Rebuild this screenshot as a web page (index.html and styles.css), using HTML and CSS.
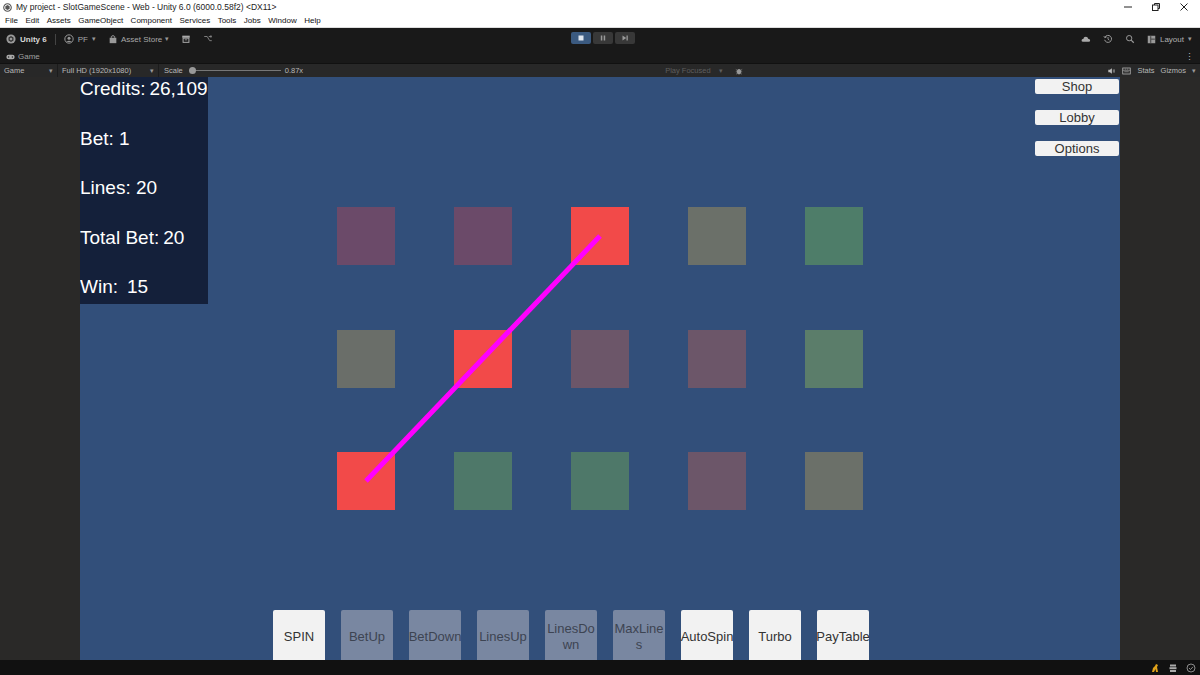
FILE: index.html
```html
<!DOCTYPE html>
<html lang="en">
<head>
  <meta charset="UTF-8" />
  <title>My project - SlotGameScene - Web - Unity 6.0</title>
  <link rel="stylesheet" href="styles.css">
</head>
<body>

  <div class="titlebar">
    <div class="title-left">
      <svg class="app-icon" viewBox="0 0 10 10"><circle cx="5" cy="5" r="4.2" fill="none" stroke="#555" stroke-width="1.2"/><path d="M5 2.2 L7.4 3.6 L7.4 6.4 L5 7.8 L2.6 6.4 L2.6 3.6 Z" fill="#555"/></svg>
      <span>My project - SlotGameScene - Web - Unity 6.0 (6000.0.58f2) &lt;DX11&gt;</span>
    </div>
    <div class="win-controls">
      <svg viewBox="0 0 10 10"><path d="M1 5 H9" stroke="#222" stroke-width="1"/></svg>
      <svg viewBox="0 0 10 10"><rect x="1.5" y="3" width="5.5" height="5.5" fill="none" stroke="#222"/><path d="M3.5 3 V1.5 H8.5 V6.5 H7" fill="none" stroke="#222"/></svg>
      <svg viewBox="0 0 10 10"><path d="M1.5 1.5 L8.5 8.5 M8.5 1.5 L1.5 8.5" stroke="#222" stroke-width="1"/></svg>
    </div>
  </div>

  <div class="menubar">
    <span>File</span><span>Edit</span><span>Assets</span><span>GameObject</span><span>Component</span><span>Services</span><span>Tools</span><span>Jobs</span><span>Window</span><span>Help</span>
  </div>

  <div class="toolbar">
    <div class="tb-left">
      <div class="tb-item unity">
        <svg viewBox="0 0 12 12"><circle cx="6" cy="6" r="5.5" fill="#9a9a9a"/><path d="M6 2.5 L9 4.2 L9 7.8 L6 9.5 L3 7.8 L3 4.2 Z" fill="#333"/><path d="M6 4.3 L7.5 5.1 L7.5 6.9 L6 7.7 L4.5 6.9 L4.5 5.1 Z" fill="#9a9a9a"/></svg>
        <b>Unity 6</b>
      </div>
      <div class="tb-sep"></div>
      <div class="tb-item">
        <svg viewBox="0 0 12 12"><circle cx="6" cy="6" r="5" fill="none" stroke="#999" stroke-width="1.2"/><circle cx="6" cy="5" r="1.8" fill="#999"/><path d="M3 9.5 Q6 6.5 9 9.5" fill="#999"/></svg>
        <span>PF</span><span class="caret">▾</span>
      </div>
      <div class="tb-item store">
        <svg viewBox="0 0 12 12"><rect x="2" y="4.5" width="8" height="6.5" fill="#999"/><path d="M4 4.5 V3 Q6 0.8 8 3 V4.5" fill="none" stroke="#999" stroke-width="1.2"/></svg>
        <span>Asset Store</span><span class="caret">▾</span>
      </div>
      <div class="tb-item">
        <svg viewBox="0 0 12 12"><rect x="1.5" y="2" width="9" height="2.5" fill="#aaa"/><rect x="2.5" y="5" width="7" height="5" fill="none" stroke="#aaa" stroke-width="1.2"/><path d="M4.5 7 H7.5" stroke="#aaa"/></svg>
      </div>
      <div class="tb-item">
        <svg viewBox="0 0 12 12"><path d="M1.5 3 H5 M5 3 L8 8 H10.5 M7 3 H10.5 M9.5 1.5 V4.5" fill="none" stroke="#888" stroke-width="1.1"/></svg>
      </div>
    </div>

    <div class="play-controls">
      <div class="pbtn active"><svg viewBox="0 0 10 10"><rect x="2.5" y="2.5" width="5" height="5" fill="#dfe6ef"/></svg></div>
      <div class="pbtn"><svg viewBox="0 0 10 10"><rect x="2.8" y="2.5" width="1.5" height="5" fill="#999"/><rect x="5.7" y="2.5" width="1.5" height="5" fill="#999"/></svg></div>
      <div class="pbtn"><svg viewBox="0 0 10 10"><path d="M2.5 2.5 L6.3 5 L2.5 7.5 Z" fill="#999"/><rect x="6.5" y="2.5" width="1.3" height="5" fill="#999"/></svg></div>
    </div>

    <div class="tb-right">
      <svg viewBox="0 0 14 12"><path d="M3 10 Q0.5 10 0.8 7.6 Q1.2 5.8 3.2 6 Q3.6 2.8 6.8 2.8 Q9.6 3 10 5.8 Q12.8 5.8 12.8 8 Q12.8 10 10.8 10 Z" fill="#aaa"/></svg>
      <svg viewBox="0 0 12 12"><path d="M2.3 4 A4.2 4.2 0 1 1 2 7" fill="none" stroke="#999" stroke-width="1.2"/><path d="M1 2.5 L2.3 4.5 L4.3 3.5" fill="none" stroke="#999" stroke-width="1.1"/><path d="M6 3.6 V6.2 L7.6 7.4" fill="none" stroke="#999" stroke-width="1.1"/></svg>
      <svg viewBox="0 0 12 12"><circle cx="5" cy="5" r="3.2" fill="none" stroke="#999" stroke-width="1.2"/><path d="M7.4 7.4 L10.5 10.5" stroke="#999" stroke-width="1.5"/></svg>
      <div class="layout">
        <svg viewBox="0 0 12 12"><rect x="1" y="1" width="10" height="10" fill="#999"/><path d="M5 1.5 V10.5 M5.5 5.5 H10.5" stroke="#222" stroke-width="1"/></svg>
        <span>Layout</span><span class="caret">▾</span>
      </div>
    </div>
  </div>

  <div class="tabbar">
    <div class="tab">
      <svg viewBox="0 0 12 8"><rect x="0.5" y="1" width="11" height="6" rx="3" fill="#aaa"/><circle cx="3.5" cy="4" r="1" fill="#222"/><circle cx="8.5" cy="4" r="1" fill="#222"/></svg>
      <span>Game</span>
    </div>
    <span class="kebab">⋮</span>
  </div>

  <div class="gamebar">
    <div class="gb-drop gb-game"><span>Game</span><span class="caret">▾</span></div>
    <div class="gb-drop gb-res"><span>Full HD (1920x1080)</span><span class="caret">▾</span></div>
    <div class="gb-scale">
      <span>Scale</span>
      <div class="slider"><div class="knob"></div></div>
      <span>0.87x</span>
    </div>
    <div class="gb-play">
      <span class="dim">Play Focused</span><span class="caret dim">▾</span>
      <svg viewBox="0 0 10 10"><ellipse cx="5" cy="5.8" rx="2.6" ry="3.4" fill="#999"/><path d="M1 3 L3 4.5 M9 3 L7 4.5 M1 6 H2.5 M9 6 H7.5 M1.5 9 L3 7.5 M8.5 9 L7 7.5" stroke="#999" stroke-width="0.8"/></svg>
    </div>
    <div class="gb-right">
      <svg viewBox="0 0 10 10"><path d="M1 3.5 H3 L5.5 1.5 V8.5 L3 6.5 H1 Z" fill="#bbb"/><path d="M7 3.5 Q8 5 7 6.5 M8 2.5 Q9.6 5 8 7.5" fill="none" stroke="#bbb" stroke-width="0.7"/></svg>
      <svg viewBox="0 0 12 10"><rect x="1" y="1" width="10" height="8" fill="none" stroke="#bbb" stroke-width="1"/><path d="M1 4 H11 M3 6 H9 M4 2.5 H5 M7 2.5 H8" stroke="#bbb" stroke-width="0.8"/></svg>
      <span>Stats</span>
      <span>Gizmos</span><span class="caret">▾</span>
    </div>
  </div>

  <div class="gameview">
    <div class="side"></div>

    <div class="stage">
      <div class="stats">
        <div class="stat">Credits:<span class="val">26,109</span></div>
        <div class="stat">Bet: 1</div>
        <div class="stat">Lines: 20</div>
        <div class="stat">Total Bet:<span class="val">20</span></div>
        <div class="stat">Win:<span class="val wide">15</span></div>
      </div>

      <div class="menu">
        <button class="menu-btn">Shop</button>
        <button class="menu-btn">Lobby</button>
        <button class="menu-btn">Options</button>
      </div>

      <div class="reels">
        <div class="cell purple"></div>
        <div class="cell purple"></div>
        <div class="cell red"></div>
        <div class="cell grey"></div>
        <div class="cell green"></div>

        <div class="cell olive"></div>
        <div class="cell red"></div>
        <div class="cell mauve"></div>
        <div class="cell mauve"></div>
        <div class="cell sage"></div>

        <div class="cell red"></div>
        <div class="cell teal"></div>
        <div class="cell teal"></div>
        <div class="cell mauve"></div>
        <div class="cell grey"></div>

        <!-- winning payline -->
        <svg class="payline" viewBox="0 0 526 303">
          <line x1="29" y1="274" x2="263" y2="29" stroke="#ff00ff" stroke-width="5"/>
        </svg>
      </div>

      <div class="controls">
        <button class="ctl">SPIN</button>
        <button class="ctl off">BetUp</button>
        <button class="ctl off">BetDown</button>
        <button class="ctl off">LinesUp</button>
        <button class="ctl off">LinesDo<br>wn</button>
        <button class="ctl off">MaxLine<br>s</button>
        <button class="ctl">AutoSpin</button>
        <button class="ctl">Turbo</button>
        <button class="ctl">PayTable</button>
      </div>
    </div>

    <div class="side"></div>
  </div>

  <div class="statusbar">
    <svg viewBox="0 0 10 10"><path d="M2 9 L3 5 L5 3 L6 1 L8 2 L7 4 L8 9 L6 9 L5.5 6 L4 9 Z" fill="#e0a21a"/></svg>
    <svg viewBox="0 0 10 10"><rect x="2" y="1.5" width="6" height="2" fill="#aaa"/><rect x="1.5" y="4.2" width="7" height="2" fill="#aaa"/><rect x="2" y="7" width="6" height="2" fill="#aaa"/></svg>
    <svg viewBox="0 0 10 10"><circle cx="5" cy="5" r="4" fill="none" stroke="#999" stroke-width="0.9"/><path d="M3 5 L4.5 6.5 L7 3.8" fill="none" stroke="#999" stroke-width="0.9"/></svg>
  </div>

</body>
</html>
```

FILE: styles.css
```css
body {
  margin: 0;
  width: 1200px;
  height: 675px;
  overflow: hidden;
  background: #191919;
  font-family: 'Liberation Sans', Arial, sans-serif;
}

svg {
  display: block;
}

/* window chrome */

.titlebar {
  height: 14px;
  background: #fff;
  display: flex;
  align-items: center;
  justify-content: space-between;
  font-size: 8.5px;
  color: #222;
}

.title-left {
  display: flex;
  align-items: center;
  gap: 4px;
  padding-left: 3px;
}

.app-icon {
  width: 9px;
  height: 9px;
}

.win-controls {
  display: flex;
  gap: 18px;
  padding-right: 11px;
}

.win-controls svg {
  width: 10px;
  height: 10px;
}

.menubar {
  height: 13px;
  background: #fff;
  border-bottom: 1px solid #ddd;
  display: flex;
  align-items: center;
  gap: 7.5px;
  padding-left: 5px;
  font-size: 8px;
  color: #111;
}

.toolbar {
  height: 22px;
  background: #191919;
  display: flex;
  align-items: center;
  position: relative;
  color: #bdbdbd;
  font-size: 8px;
}

.tb-left {
  display: flex;
  align-items: center;
  padding-left: 6px;
  gap: 12px;
}

.tb-item {
  display: flex;
  align-items: center;
  gap: 4px;
  color: #a8a8a8;
}

.tb-item svg {
  width: 10px;
  height: 10px;
}

.tb-item.unity {
  color: #d8d8d8;
  gap: 4px;
}

.tb-sep {
  width: 1px;
  height: 11px;
  background: #444;
  margin: 0 -4px;
}

.caret {
  font-size: 7px;
  color: #999;
}

.store {
  gap: 3px;
}

.play-controls {
  position: absolute;
  left: 571px;
  top: 4px;
  display: flex;
  gap: 2px;
}

.pbtn {
  width: 20px;
  height: 12px;
  background: #383838;
  border-radius: 2px;
  display: flex;
  align-items: center;
  justify-content: center;
}

.pbtn.active {
  background: #3b5a80;
}

.pbtn svg {
  width: 10px;
  height: 10px;
}

.tb-right {
  margin-left: auto;
  display: flex;
  align-items: center;
  gap: 12px;
  padding-right: 8px;
}

.tb-right > svg {
  width: 10px;
  height: 10px;
}

.layout {
  display: flex;
  align-items: center;
  gap: 4px;
  color: #b0b0b0;
}

.layout svg {
  width: 9px;
  height: 9px;
}

.tabbar {
  height: 13px;
  background: #191919;
  display: flex;
  align-items: center;
  justify-content: space-between;
  font-size: 8px;
  color: #a0a0a0;
}

.tab {
  display: flex;
  align-items: center;
  gap: 3px;
  padding-left: 6px;
}

.tab svg {
  width: 9px;
  height: 6px;
}

.kebab {
  padding-right: 6px;
  font-size: 9px;
  color: #bbb;
}

/* game view toolbar */

.gamebar {
  height: 14px;
  box-sizing: border-box;
  background: #282828;
  border-top: 1px solid #111;
  display: flex;
  align-items: center;
  font-size: 7.5px;
  color: #b8b8b8;
}

.gb-drop {
  display: flex;
  align-items: center;
  justify-content: space-between;
  height: 100%;
  padding: 0 4px;
  border-right: 1px solid #1c1c1c;
  box-sizing: border-box;
}

.gb-game {
  width: 58px;
}

.gb-res {
  width: 101px;
}

.gb-scale {
  display: flex;
  align-items: center;
  gap: 4px;
  padding-left: 5px;
}

.slider {
  width: 92px;
  height: 1px;
  background: #777;
  position: relative;
  margin-left: 2px;
}

.knob {
  position: absolute;
  left: 0;
  top: -3px;
  width: 7px;
  height: 7px;
  border-radius: 50%;
  background: #999;
}

.gb-play {
  display: flex;
  align-items: center;
  gap: 8px;
  margin-left: 362px;
}

.gb-play svg {
  width: 8px;
  height: 8px;
  margin-left: 4px;
}

.dim {
  color: #5e5e5e;
}

.gb-right {
  margin-left: auto;
  display: flex;
  align-items: center;
  gap: 6px;
  padding-right: 4px;
}

.gb-right svg {
  width: 9px;
  height: 8px;
}

/* game view */

.gameview {
  height: 583px;
  display: flex;
}

.side {
  width: 80px;
  background: #2a2928;
}

.stage {
  width: 1040px;
  background: #324f7a;
  display: grid;
  overflow: hidden;
  position: relative;
}

.stage > * {
  grid-area: 1 / 1;
}

.stats {
  align-self: start;
  justify-self: start;
  box-sizing: border-box;
  width: 128px;
  height: 227px;
  padding-top: 1px;
  background: #14203a;
  display: flex;
  flex-direction: column;
  gap: 27.5px;
  color: #fff;
  font-size: 19px;
}

.stat {
  height: 22px;
  line-height: 22px;
  white-space: nowrap;
}

.val {
  margin-left: 4px;
}

.val.wide {
  margin-left: 9px;
}

.menu {
  align-self: start;
  justify-self: end;
  margin: 2px 1px 0 0;
  display: flex;
  flex-direction: column;
  gap: 16px;
}

.menu-btn {
  width: 84px;
  height: 15px;
  padding: 0;
  border: none;
  border-radius: 2px;
  background: #f2f2f2;
  color: #333;
  font-family: 'Liberation Sans', Arial, sans-serif;
  font-size: 13px;
  line-height: 15px;
}

.reels {
  align-self: start;
  justify-self: center;
  margin-top: 130px;
  position: relative;
  display: grid;
  grid-template-columns: repeat(5, 58px);
  grid-template-rows: repeat(3, 58px);
  column-gap: 59px;
  row-gap: 64.5px;
}

.cell.purple { background: #6b4a69; }
.cell.red { background: #f24a49; }
.cell.grey { background: #6b7069; }
.cell.green { background: #4e7d69; }
.cell.olive { background: #6a6e69; }
.cell.mauve { background: #6c5669; }
.cell.sage { background: #5b7d6a; }
.cell.teal { background: #4e7869; }

.payline {
  position: absolute;
  left: 0;
  top: 0;
  width: 526px;
  height: 303px;
}

.controls {
  align-self: start;
  justify-self: start;
  margin: 533px 0 0 193px;
  display: flex;
  gap: 16px;
}

.ctl {
  width: 52px;
  height: 54px;
  padding: 0;
  border: none;
  border-radius: 2px;
  background: #f2f2f2;
  color: #333;
  font-family: 'Liberation Sans', Arial, sans-serif;
  font-size: 13px;
  line-height: 16px;
  white-space: nowrap;
  display: flex;
  align-items: center;
  justify-content: center;
  text-align: center;
  overflow: visible;
}

.ctl.off {
  background: #7987a1;
  color: #3d4452;
}

.statusbar {
  height: 15px;
  background: #111;
  display: flex;
  align-items: center;
  justify-content: flex-end;
  gap: 8px;
  padding-right: 4px;
}

.statusbar svg {
  width: 10px;
  height: 10px;
}
```
